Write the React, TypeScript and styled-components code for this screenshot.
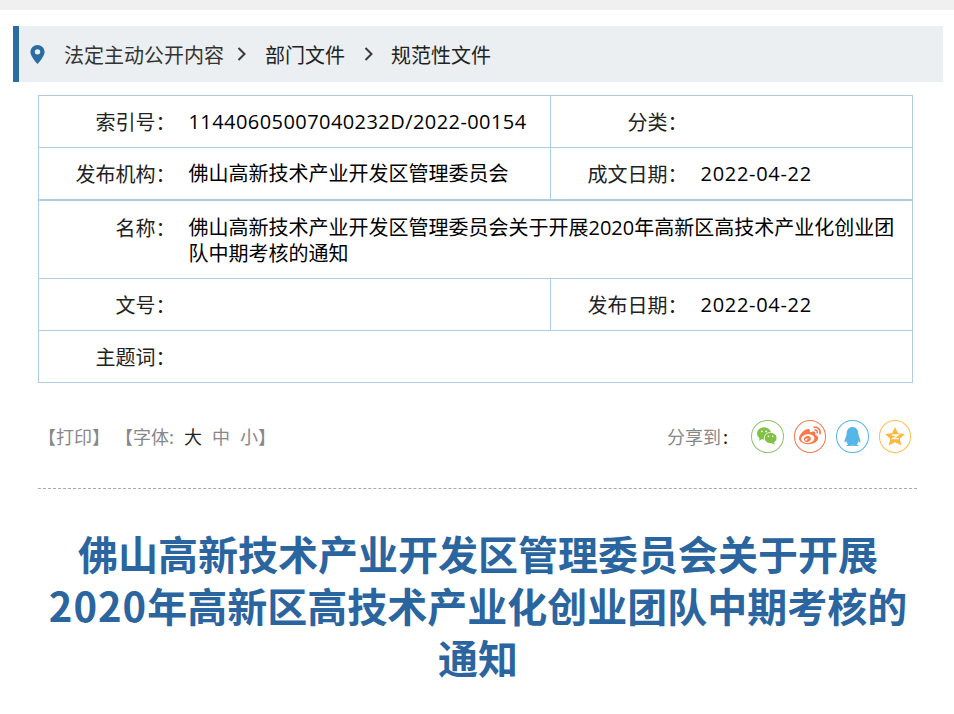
import { FC } from 'react'
import styled, { createGlobalStyle } from 'styled-components'
import { FaWeibo, FaQq } from 'react-icons/fa'

const GlobalStyle = createGlobalStyle`
  html, body {
    margin: 0;
    padding: 0;
    background: #fff;
    overflow: hidden;
  }
  body {
    font-family: "Noto Sans CJK SC", "Liberation Sans", sans-serif;
    color: #000;
  }
`

const Page = styled.div`
  width: 954px;
  height: 714px;
  overflow: hidden;
`

const TopBar = styled.div`
  height: 10px;
  background: #f0f0f0;
`

const Breadcrumb = styled.div`
  display: flex;
  align-items: center;
  height: 56px;
  margin: 16px 11px 13px 13px;
  padding-left: 11px;
  background: #ebeff2;
  border-left: 6px solid #2b6ca3;
  font-size: 20px;
`

const PinBox = styled.span`
  display: flex;
  width: 34px;
`

const Crumb = styled.span<{ color?: string }>`
  color: ${props => props.color || '#222'};
  line-height: 56px;
  position: relative;
  top: 1px;
`

const Chevron = styled.span<{ before: number; after: number }>`
  display: flex;
  margin: 0 ${props => props.after}px 0 ${props => props.before}px;
`

const InfoTable = styled.table`
  width: 874px;
  margin-left: 38px;
  border-collapse: collapse;
  table-layout: fixed;
  font-size: 20px;
  line-height: 26px;
  border: 1px solid #aecde4;
`

const Row = styled.tr<{ height?: number; thick?: boolean }>`
  height: ${props => props.height || 52}px;
  & > td {
    border-top-width: ${props => (props.thick ? 2 : 1)}px;
  }
`

const Label = styled.td<{ offset?: number; top?: boolean }>`
  padding: ${props => (props.top ? 14 : props.offset || 0)}px 13px 0 0;
  border: 1px solid #aecde4;
  border-right: none;
  text-align: right;
  color: #222;
  vertical-align: ${props => (props.top ? 'top' : 'middle')};
`

const Value = styled.td<{ divided?: boolean; offset?: number }>`
  padding: ${props => props.offset || 0}px 14px 0 0;
  border: 1px solid #aecde4;
  border-left: none;
  border-right: ${props => (props.divided ? '1px solid #aecde4' : 'none')};
  color: #000;
  font-family: "Open Sans", "Noto Sans CJK SC", sans-serif;
  vertical-align: middle;
`

const Code = styled.span<{ spacing: number }>`
  letter-spacing: ${props => props.spacing}px;
`

const Toolbar = styled.div`
  display: flex;
  align-items: center;
  justify-content: space-between;
  height: 38px;
  margin: 34px 37px 0 38px;
  padding: 0 6px 14px 0;
  font-size: 18px;
  color: #888;
`

const ToolLinks = styled.div`
  display: flex;
  align-items: center;
`

const FontGroup = styled.span`
  margin-left: 5px;
`

const SizeOption = styled.span<{ active?: boolean }>`
  margin-left: 10px;
  color: ${props => (props.active ? '#222' : '#888')};
`

const ShareGroup = styled.div`
  display: flex;
  align-items: center;
  gap: 10px;
`

const ShareLabel = styled.span`
  margin-right: 13px;
`

const ShareColon = styled.b`
  margin-left: 2px;
  font-weight: 400;
  color: #111;
`

const ShareButton = styled.span<{ color: string }>`
  display: flex;
  align-items: center;
  justify-content: center;
  box-sizing: border-box;
  width: 32.5px;
  height: 33px;
  border: 1px solid ${props => props.color};
  border-radius: 50%;
  color: ${props => props.color};
`

const Divider = styled.div`
  margin: 19px 37px 0 38px;
  border-top: 1px dashed #aaa;
`

const Title = styled.h1`
  margin: 38px 37px 0 39px;
  font-size: 40px;
  line-height: 52px;
  font-weight: 700;
  text-align: center;
  color: #2b65a0;
`

const TitleDigits = styled.span`
  letter-spacing: 1px;
`

const PinIcon: FC = () => (
  <svg width="15" height="19" viewBox="0 0 16 21" preserveAspectRatio="none">
    <path
      fill="#2b6ca3"
      fillRule="evenodd"
      d="M8 0a7.6 7.6 0 0 0-7.6 7.6C.4 12.6 8 21 8 21s7.6-8.4 7.6-13.4A7.6 7.6 0 0 0 8 0zm0 10.4a2.9 2.9 0 1 1 0-5.8 2.9 2.9 0 0 1 0 5.8z"
    />
  </svg>
)

const ChevronIcon: FC = () => (
  <svg width="9" height="14" viewBox="0 0 9 14">
    <path d="M1.5 1l6 6-6 6" fill="none" stroke="#3a3a3a" strokeWidth="2" />
  </svg>
)

const WechatIcon: FC = () => (
  <svg width="20" height="18" viewBox="0 0 20 18">
    <ellipse cx="7" cy="6.4" rx="7" ry="6.2" fill="#7fc241" />
    <path d="M2.6 10.4l-.5 3.4 4-2.4z" fill="#7fc241" />
    <ellipse cx="13.6" cy="11" rx="6.4" ry="5.6" fill="#7fc241" stroke="#fff" strokeWidth="0.8" />
    <path d="M16.8 15l1 2.8-3.6-1.9z" fill="#7fc241" />
    <circle cx="4.8" cy="4.4" r="0.9" fill="#fff" />
    <circle cx="9.2" cy="4.4" r="0.9" fill="#fff" />
    <circle cx="11.4" cy="9.4" r="0.8" fill="#fff" />
    <circle cx="15.6" cy="9.4" r="0.8" fill="#fff" />
  </svg>
)

const QzoneIcon: FC = () => (
  <svg width="20" height="19" viewBox="0 0 20 19">
    <path d="M10 0l3 6.2 6.8.9-5 4.6 1.5 6.8L10 15.2 3.7 18.5l1.5-6.8-5-4.6 6.8-.9z" fill="#fdb93c" />
    <path d="M7 8h6l-5 3.6h5.6" fill="none" stroke="#fff" strokeWidth="1.3" />
  </svg>
)

function App() {
  return (
    <Page>
      <GlobalStyle />
      <TopBar />
      <Breadcrumb>
        <PinBox>
          <PinIcon />
        </PinBox>
        <Crumb color='#333'>法定主动公开内容</Crumb>
        <Chevron before={13} after={19}>
          <ChevronIcon />
        </Chevron>
        <Crumb>部门文件</Crumb>
        <Chevron before={19} after={18}>
          <ChevronIcon />
        </Chevron>
        <Crumb>规范性文件</Crumb>
      </Breadcrumb>

      <InfoTable>
        <colgroup>
          <col style={{ width: 150 }} />
          <col style={{ width: 362 }} />
          <col style={{ width: 150 }} />
          <col style={{ width: 212 }} />
        </colgroup>
        <tbody>
          <Row>
            <Label>索引号：</Label>
            <Value divided>
              <Code spacing={0.43}>11440605007040232D/2022-00154</Code>
            </Value>
            <Label>分类：</Label>
            <Value />
          </Row>
          <Row>
            <Label offset={2}>发布机构：</Label>
            <Value divided offset={2}>
              佛山高新技术产业开发区管理委员会
            </Value>
            <Label offset={2}>成文日期：</Label>
            <Value offset={2}>
              <Code spacing={0.7}>2022-04-22</Code>
            </Value>
          </Row>
          <Row height={79} thick>
            <Label top>名称：</Label>
            <Value colSpan={3} offset={4}>
              佛山高新技术产业开发区管理委员会关于开展2020年高新区高技术产业化创业团队中期考核的通知
            </Value>
          </Row>
          <Row>
            <Label>文号：</Label>
            <Value divided />
            <Label>发布日期：</Label>
            <Value>
              <Code spacing={0.7}>2022-04-22</Code>
            </Value>
          </Row>
          <Row>
            <Label>主题词：</Label>
            <Value colSpan={3} />
          </Row>
        </tbody>
      </InfoTable>

      <Toolbar>
        <ToolLinks>
          <span>【打印】</span>
          <FontGroup>【字体:</FontGroup>
          <SizeOption active>大</SizeOption>
          <SizeOption>中</SizeOption>
          <SizeOption>小</SizeOption>
          <span>】</span>
        </ToolLinks>
        <ShareGroup>
          <ShareLabel>
            分享到<ShareColon>:</ShareColon>
          </ShareLabel>
          <ShareButton color='#8cc665'>
            <WechatIcon />
          </ShareButton>
          <ShareButton color='#fb7648'>
            <FaWeibo size={22} />
          </ShareButton>
          <ShareButton color='#56b6e7'>
            <FaQq size={19} />
          </ShareButton>
          <ShareButton color='#fdbe4d'>
            <QzoneIcon />
          </ShareButton>
        </ShareGroup>
      </Toolbar>

      <Divider />

      <Title>
        佛山高新技术产业开发区管理委员会关于开展<TitleDigits>2020</TitleDigits>年高新区高技术产业化创业团队中期考核的通知
      </Title>
    </Page>
  )
}

export default App
